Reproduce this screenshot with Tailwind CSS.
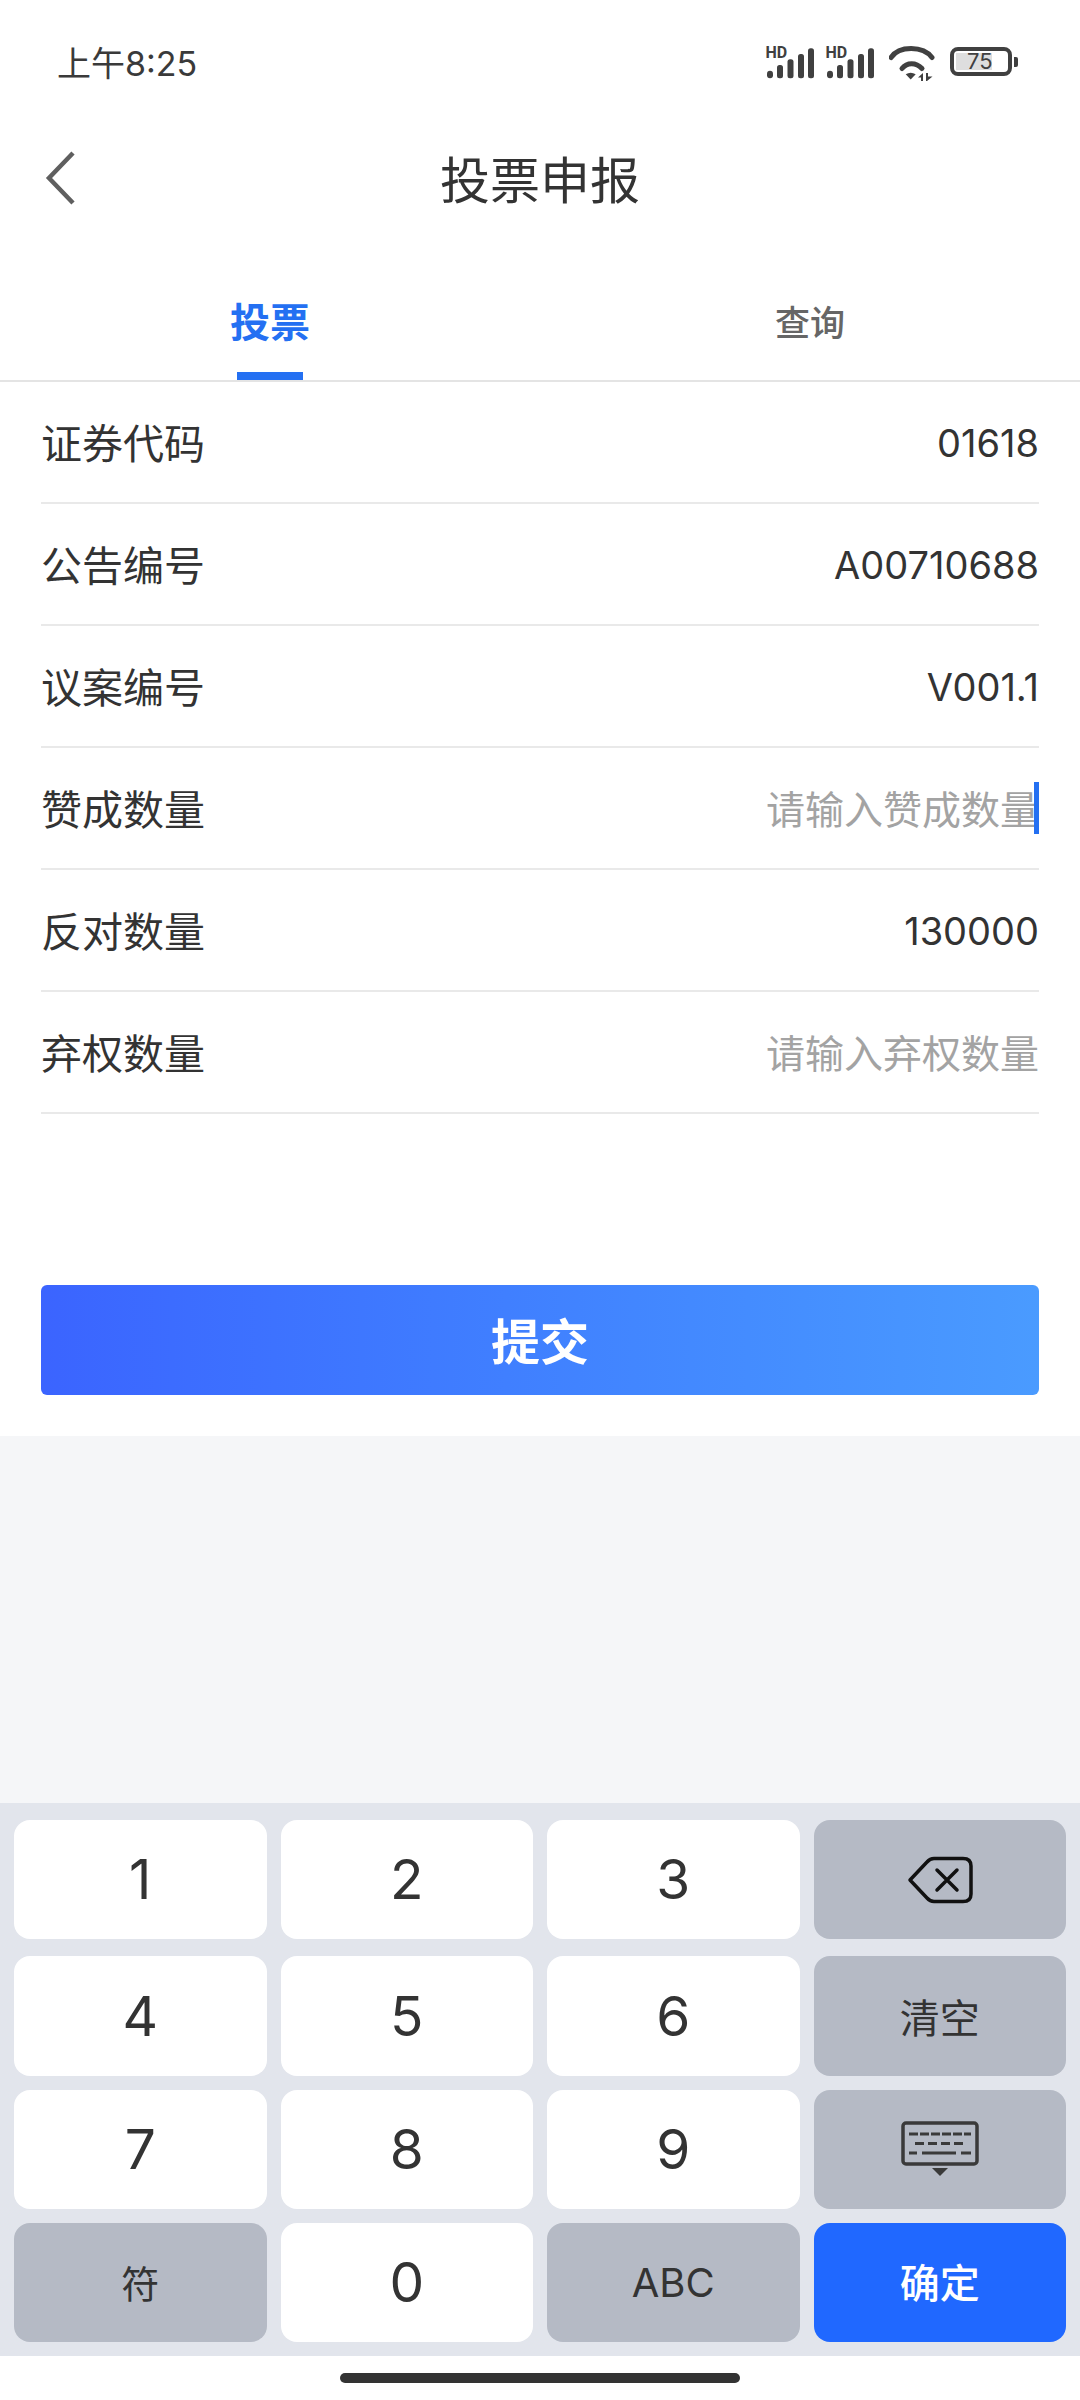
<!DOCTYPE html>
<html lang="zh-CN">
<head>
<meta charset="utf-8">
<script src="https://cdn.jsdelivr.net/npm/@tailwindcss/browser@4"></script>
</head>
<body class="bg-white">
<div class="w-[1080px] h-[2400px] flex flex-col bg-white overflow-hidden text-[#333333] font-['Inter','Noto_Sans_CJK_SC',sans-serif]">
  <!-- status bar -->
  <div class="h-[120px] shrink-0 pl-[57px] pr-[62px] pt-[41px] flex justify-between items-start">
    <span class="text-[34px] leading-[46px] font-normal text-[#3a3a3a]">上午8:25</span>
    <div class="flex items-start pt-[3px]">
      <svg width="50" height="36" viewBox="0 0 50 36" class="mr-[10px]" fill="#404040">
        <text x="1.500" y="14.300" font-family="Roboto" font-weight="700" font-size="16">HD</text>
        <rect x="3" y="26.700" width="6" height="7.600" rx="3"/><rect x="13" y="21" width="6" height="13.300" rx="2.500"/><rect x="23.500" y="15.300" width="6" height="19" rx="2.500"/><rect x="34" y="10" width="6" height="24.300" rx="2.500"/><rect x="44" y="4.300" width="6" height="30" rx="2.500"/>
      </svg>
      <svg width="50" height="36" viewBox="0 0 50 36" class="mr-[15px]" fill="#404040">
        <text x="1.500" y="14.300" font-family="Roboto" font-weight="700" font-size="16">HD</text>
        <rect x="3" y="26.700" width="6" height="7.600" rx="3"/><rect x="13" y="21" width="6" height="13.300" rx="2.500"/><rect x="23.500" y="15.300" width="6" height="19" rx="2.500"/><rect x="34" y="10" width="6" height="24.300" rx="2.500"/><rect x="44" y="4.300" width="6" height="30" rx="2.500"/>
      </svg>
      <svg width="47" height="38" viewBox="0 0 47 38" class="mr-[14px]" fill="none" stroke="#404040" stroke-width="5" stroke-linecap="round">
        <path d="M2 13.500 C10 1.500 34 1.500 43 13.500"/>
        <path d="M13 24.500 C18 18 27 18 33 24.500"/>
        <path d="M16.700 30.300 Q21.700 27 26.700 30.300 L21.700 35.500 Z" fill="#404040" stroke="none"/>
        <path d="M29 33.500 L34 29 V37 H32 V33.500 Z M37 29 H39 V32.500 H43.500 L38 37 H37 Z" fill="#404040" stroke="none"/>
      </svg>
      <div class="flex items-center mt-[3px]">
        <div class="relative w-[62px] h-[29px] rounded-[8px] border-[4px] border-[#404040] overflow-hidden">
          <div class="absolute left-[2px] top-[2px] bottom-[2px] w-[36px] bg-[#dedede]"></div>
          <span class="absolute left-[13px] top-[-4px] text-[22px] leading-[29px] text-[#404040]">75</span>
        </div>
        <div class="w-[4px] h-[10px] ml-[2px] rounded-r-[2px] bg-[#404040]"></div>
      </div>
    </div>
  </div>
  <!-- nav -->
  <div class="relative h-[118px] shrink-0 pt-[3px] flex items-center justify-center">
    <svg width="34" height="56" viewBox="0 0 34 56" class="absolute left-[43px] top-[30px]" fill="none" stroke="#5f5f5f" stroke-width="4.500">
      <path d="M30 3 L6 28 L30 53"/>
    </svg>
    <span class="text-[50px] leading-[60px] text-[#333333]">投票申报</span>
  </div>
  <!-- tabs -->
  <div class="relative h-[144px] shrink-0 flex border-b-[2px] border-[#e4e4e4]">
    <div class="w-[540px] pt-[60px] flex justify-center">
      <span class="text-[40px] leading-[50px] font-bold text-[#2470f2]">投票</span>
    </div>
    <div class="w-[540px] pt-[60px] flex justify-center">
      <span class="text-[35px] leading-[50px] font-medium text-[#666666]">查询</span>
    </div>
    <div class="absolute left-[237px] bottom-0 w-[66px] h-[8px] bg-[#2470f2]"></div>
  </div>
  <!-- form -->
  <div class="h-[1054px] shrink-0 px-[41px] flex flex-col">
    <div class="h-[122px] shrink-0 pt-[5px] border-b-[2px] border-[#e9e9e9] flex items-center justify-between text-[41px]">
      <span>证券代码</span><span class="text-[38px] leading-[44px] mb-[3px]">01618</span>
    </div>
    <div class="h-[122px] shrink-0 pt-[5px] border-b-[2px] border-[#e9e9e9] flex items-center justify-between text-[41px]">
      <span>公告编号</span><span class="text-[38px] leading-[44px] mb-[3px]">A00710688</span>
    </div>
    <div class="h-[122px] shrink-0 pt-[5px] border-b-[2px] border-[#e9e9e9] flex items-center justify-between text-[41px]">
      <span>议案编号</span><span class="text-[38px] leading-[44px] mb-[3px]">V001.1</span>
    </div>
    <div class="relative h-[122px] shrink-0 pt-[5px] border-b-[2px] border-[#e9e9e9] flex items-center justify-between text-[41px]">
      <span>赞成数量</span><span class="text-[39px] text-[#a3a3a3]">请输入赞成数量</span>
      <div class="absolute right-0 top-[34px] w-[5px] h-[52px] bg-[#2470f2]"></div>
    </div>
    <div class="h-[122px] shrink-0 pt-[5px] border-b-[2px] border-[#e9e9e9] flex items-center justify-between text-[41px]">
      <span>反对数量</span><span class="text-[38px] leading-[44px] mb-[3px]">130000</span>
    </div>
    <div class="h-[122px] shrink-0 pt-[5px] border-b-[2px] border-[#e9e9e9] flex items-center justify-between text-[41px]">
      <span>弃权数量</span><span class="text-[39px] text-[#a3a3a3]">请输入弃权数量</span>
    </div>
    <button class="mt-[171px] h-[110px] pt-[5px] w-full shrink-0 rounded-[6px] bg-gradient-to-r from-[#3b64ff] to-[#4a9bff] text-white text-[49px] font-bold">提交</button>
  </div>
  <!-- grey area -->
  <div class="h-[367px] shrink-0 bg-[#f5f6f8]"></div>
  <!-- keyboard -->
  <div class="h-[553px] shrink-0 bg-[#e2e5ec] px-[14px] pt-[17px]">
    <div class="grid grid-cols-4 gap-x-[14px] h-[119px] text-[55px]">
      <div class="rounded-[16px] bg-white flex items-center justify-center">1</div>
      <div class="rounded-[16px] bg-white flex items-center justify-center">2</div>
      <div class="rounded-[16px] bg-white flex items-center justify-center">3</div>
      <div class="rounded-[16px] bg-[#b5bac5] flex items-center justify-center">
        <svg width="66" height="48" viewBox="0 0 66 48" fill="none" stroke="#111111" stroke-width="3.500" stroke-linejoin="round" stroke-linecap="round">
          <path d="M3 24 L20 6 Q23 2.500 27 2.500 L56 2.500 Q64 2.500 64 10 L64 38 Q64 45.500 56 45.500 L27 45.500 Q23 45.500 20 42 Z"/>
          <path d="M30 14 L50 34 M50 14 L30 34"/>
        </svg>
      </div>
    </div>
    <div class="grid grid-cols-4 gap-x-[14px] h-[120px] mt-[17px] text-[55px]">
      <div class="rounded-[16px] bg-white flex items-center justify-center">4</div>
      <div class="rounded-[16px] bg-white flex items-center justify-center">5</div>
      <div class="rounded-[16px] bg-white flex items-center justify-center">6</div>
      <div class="rounded-[16px] bg-[#b5bac5] pt-[5px] flex items-center justify-center text-[40px]">清空</div>
    </div>
    <div class="grid grid-cols-4 gap-x-[14px] h-[119px] mt-[14px] text-[55px]">
      <div class="rounded-[16px] bg-white flex items-center justify-center">7</div>
      <div class="rounded-[16px] bg-white flex items-center justify-center">8</div>
      <div class="rounded-[16px] bg-white flex items-center justify-center">9</div>
      <div class="rounded-[16px] bg-[#b5bac5] flex items-center justify-center">
        <svg width="78" height="58" viewBox="0 0 78 58" fill="none" stroke="#3a3a3a">
          <rect x="2" y="2" width="74" height="41" rx="3" stroke-width="3.500"/>
          <path d="M8 13 H70" stroke-width="3" stroke-dasharray="9 2"/>
          <path d="M14 22.500 H64" stroke-width="3" stroke-dasharray="9 4"/>
          <path d="M8 32 H16 M21 32 H55 M60 32 H70" stroke-width="3"/>
          <path d="M31 47 H47 L39 55 Z" fill="#3a3a3a" stroke="none"/>
        </svg>
      </div>
    </div>
    <div class="grid grid-cols-4 gap-x-[14px] h-[119px] mt-[14px] text-[55px]">
      <div class="rounded-[16px] bg-[#b5bac5] pt-[3px] flex items-center justify-center text-[38px]">符</div>
      <div class="rounded-[16px] bg-white flex items-center justify-center">0</div>
      <div class="rounded-[16px] bg-[#b5bac5] flex items-center justify-center text-[40px]">ABC</div>
      <div class="rounded-[16px] bg-[#2068ff] pt-[3px] flex items-center justify-center text-[40px] font-medium text-white">确定</div>
    </div>
  </div>
  <!-- home indicator -->
  <div class="flex-1 flex justify-center pt-[17px]">
    <div class="w-[400px] h-[10px] rounded-full bg-[#333333]"></div>
  </div>
</div>
</body>
</html>
